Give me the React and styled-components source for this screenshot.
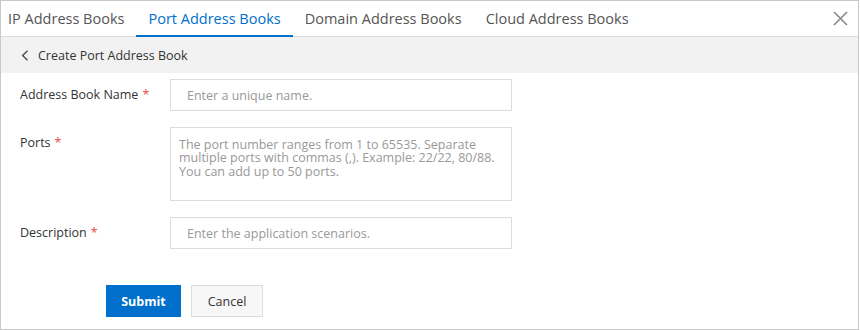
import React from "react";
import styled, { createGlobalStyle } from "styled-components";

const GlobalStyle = createGlobalStyle`
  html, body {
    margin: 0;
    padding: 0;
    background: #fff;
  }
  body {
    font-family: "Open Sans", "Noto Sans", "Liberation Sans", sans-serif;
    color: #333;
  }
`;

const Panel = styled.div`
  box-sizing: border-box;
  width: 859px;
  height: 330px;
  border: 1px solid #c8c8c8;
  display: flex;
  flex-direction: column;
`;

const TabBar = styled.div`
  display: flex;
  align-items: stretch;
  height: 35px;
  border-bottom: 1px solid #dcdcdc;
`;

const Tab = styled.div`
  display: flex;
  align-items: center;
  padding: 0 12px;
  font-size: 14.5px;
  color: ${(p) => (p.$active ? "#0070cc" : "#555")};
  border-bottom: 2px solid ${(p) => (p.$active ? "#0070cc" : "transparent")};
  margin-bottom: -1px;
  &:first-child {
    padding-left: 7px;
  }
`;

const Spacer = styled.div`
  flex: 1;
`;

const CloseButton = styled.button`
  border: 0;
  background: none;
  padding: 0;
  margin-right: 10px;
  width: 16px;
  display: flex;
  align-items: center;
  justify-content: center;
  cursor: pointer;
`;

const SubHeader = styled.div`
  height: 36px;
  background: #f2f2f2;
  display: flex;
  align-items: center;
  padding-left: 20px;
  gap: 9px;
  font-size: 12.5px;
  color: #333;
`;

const Form = styled.form`
  display: flex;
  flex-direction: column;
  gap: 16px;
  padding-top: 6px;
`;

const Row = styled.div`
  display: flex;
  align-items: flex-start;
`;

const Label = styled.label`
  box-sizing: border-box;
  width: 169px;
  padding-left: 19px;
  line-height: 32px;
  font-size: 12.5px;
  color: #333;
`;

const Required = styled.span`
  color: #e84c4c;
  margin-left: 4px;
`;

const Input = styled.input`
  box-sizing: border-box;
  width: 342px;
  height: 32px;
  border: 1px solid #dcdcdc;
  padding: 0 16px;
  font-family: inherit;
  font-size: 12.5px;
  outline: none;
  &::placeholder {
    color: #999;
  }
`;

const TextArea = styled.textarea`
  box-sizing: border-box;
  width: 342px;
  height: 74px;
  border: 1px solid #dcdcdc;
  padding: 10px 8px 5px;
  font-family: inherit;
  font-size: 12.5px;
  line-height: 13.3px;
  resize: none;
  outline: none;
  &::placeholder {
    color: #999;
  }
`;

const Actions = styled.div`
  display: flex;
  gap: 10px;
  padding-left: 105px;
  margin-top: 20px;
`;

const Button = styled.button`
  box-sizing: border-box;
  height: 32px;
  min-width: ${(p) => (p.$primary ? "75px" : "72px")};
  padding: 0 14px;
  font-family: inherit;
  font-size: 12.5px;
  font-weight: ${(p) => (p.$primary ? 700 : 400)};
  color: ${(p) => (p.$primary ? "#fff" : "#333")};
  background: ${(p) => (p.$primary ? "#0070cc" : "#f7f7f7")};
  border: 1px solid ${(p) => (p.$primary ? "#0070cc" : "#dcdcdc")};
  cursor: pointer;
`;

const tabs = [
  "IP Address Books",
  "Port Address Books",
  "Domain Address Books",
  "Cloud Address Books",
];

export default function App() {
  return (
    <>
      <GlobalStyle />
      <Panel>
        <TabBar>
          {tabs.map((t) => (
            <Tab key={t} $active={t === "Port Address Books"}>
              {t}
            </Tab>
          ))}
          <Spacer />
          <CloseButton aria-label="Close">
            <svg width="15" height="15" viewBox="0 0 15 15">
              <path
                d="M1 1L14 14M14 1L1 14"
                stroke="#888"
                strokeWidth="1.6"
                fill="none"
              />
            </svg>
          </CloseButton>
        </TabBar>
        <SubHeader>
          <svg width="8" height="11" viewBox="0 0 8 11">
            <path
              d="M6.5 0.8L1.6 5.5L6.5 10.2"
              stroke="#444"
              strokeWidth="1.3"
              fill="none"
            />
          </svg>
          Create Port Address Book
        </SubHeader>
        <Form onSubmit={(e) => e.preventDefault()}>
          <Row>
            <Label>
              Address Book Name<Required>*</Required>
            </Label>
            <Input placeholder="Enter a unique name." />
          </Row>
          <Row>
            <Label>
              Ports<Required>*</Required>
            </Label>
            <TextArea placeholder="The port number ranges from 1 to 65535. Separate multiple ports with commas (,). Example: 22/22, 80/88. You can add up to 50 ports." />
          </Row>
          <Row>
            <Label>
              Description<Required>*</Required>
            </Label>
            <Input placeholder="Enter the application scenarios." />
          </Row>
          <Actions>
            <Button $primary type="submit">
              Submit
            </Button>
            <Button type="button">Cancel</Button>
          </Actions>
        </Form>
      </Panel>
    </>
  );
}
